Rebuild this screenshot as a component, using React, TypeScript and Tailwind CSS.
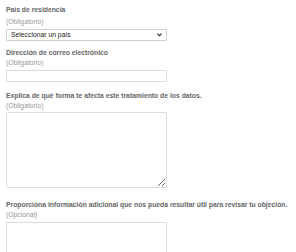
import React from 'react';

const labelCls = 'block text-[6.8px] leading-[10px] font-bold text-[#666]';
const hintCls = 'block text-[6.8px] leading-[10px] text-[#999]';
const boxCls = 'block w-[161px] border border-[#dcdcdc] rounded-[1px] bg-white text-[6.8px] outline-none';

const App: React.FC = () => {
  return (
    <div className="w-[296px] h-[252px] overflow-hidden bg-white pl-[6px] pt-[5px] font-['Liberation_Sans',Arial,sans-serif] antialiased">
      <label className={labelCls}>País de residencia</label>
      <span className={`${hintCls} mt-[2px]`}>(Obligatorio)</span>
      <div className="relative mt-[2px] w-[161px] h-[12px]">
        <select className="block appearance-none w-full h-[12px] p-0 pl-[4px] border border-[#cfcfcf] rounded-[1px] bg-white text-[6.8px] leading-[10px] text-[#222] outline-none">
          <option>Seleccionar un país</option>
        </select>
        <svg className="absolute right-[5px] top-[4px] w-[5px] h-[4px] pointer-events-none" viewBox="0 0 10 8">
          <path d="M1 1.5 L5 5.5 L9 1.5" fill="none" stroke="#333" strokeWidth="2.2" />
        </svg>
      </div>

      <label className={`${labelCls} mt-[7px]`}>Dirección de correo electrónico</label>
      <span className={hintCls}>(Obligatorio)</span>
      <input type="email" className={`${boxCls} mt-[2px] h-[12px]`} />

      <label className={`${labelCls} mt-[9px]`}>Explica de qué forma te afecta este tratamiento de los datos.</label>
      <span className={hintCls}>(Obligatorio)</span>
      <textarea className={`${boxCls} mt-[1px] h-[76px]`} />

      <label className={`${labelCls} mt-[12px]`}>Proporciona información adicional que nos pueda resultar útil para revisar tu objeción.</label>
      <span className={hintCls}>(Opcional)</span>
      <textarea className={`${boxCls} mt-[2px] h-[76px]`} />
    </div>
  );
};

export default App;
